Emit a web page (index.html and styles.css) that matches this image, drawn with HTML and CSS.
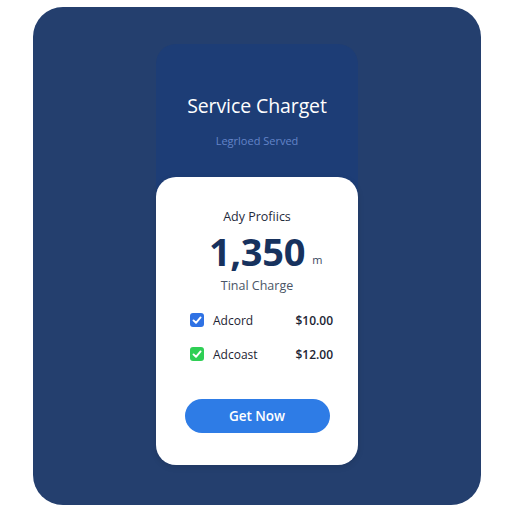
FILE: index.html
```html
<!DOCTYPE html>
<html lang="en">
<head>
<meta charset="utf-8">
<title>Service Charget</title>
<link rel="stylesheet" href="styles.css">
</head>
<body>
  <main class="panel">
    <section class="card">
      <header class="card-head">
        <h1 class="title">Service Charget</h1>
        <p class="subtitle">Legrloed Served</p>
      </header>
      <div class="card-body">
        <p class="label">Ady Profiics</p>
        <div class="amount">
          <span class="amount-value">1,350</span>
          <span class="amount-unit">m</span>
        </div>
        <p class="caption">Tinal Charge</p>
        <ul class="items">
          <li class="item">
            <span class="check check-blue">
              <svg viewBox="0 0 14 14" width="14" height="14"><path d="M3.5 7.4 L6 9.8 L10.6 4.4" fill="none" stroke="#fff" stroke-width="1.9" stroke-linecap="round" stroke-linejoin="round"/></svg>
            </span>
            <span class="item-name">Adcord</span>
            <span class="item-price">$10.00</span>
          </li>
          <li class="item">
            <span class="check check-green">
              <svg viewBox="0 0 14 14" width="14" height="14"><path d="M3.5 7.4 L6 9.8 L10.6 4.4" fill="none" stroke="#fff" stroke-width="1.9" stroke-linecap="round" stroke-linejoin="round"/></svg>
            </span>
            <span class="item-name">Adcoast</span>
            <span class="item-price">$12.00</span>
          </li>
        </ul>
        <button class="cta">Get Now</button>
      </div>
    </section>
  </main>
</body>
</html>
```

FILE: styles.css
```css
* { box-sizing: border-box; }

body {
  margin: 0;
  background: #ffffff;
  font-family: "Open Sans", "Noto Sans", sans-serif;
}

.panel {
  margin: 7px 0 0 33px;
  width: 448px;
  height: 498px;
  border-radius: 30px;
  background: #243f6e;
  display: flex;
  justify-content: center;
  padding-top: 37px;
}

.card {
  width: 202px;
  height: 421px;
  border-radius: 20px;
  background: #1d3d76;
  display: flex;
  flex-direction: column;
}

.card-head {
  height: 133px;
  display: flex;
  flex-direction: column;
  align-items: center;
  padding-top: 48px;
}

.title {
  margin: 0;
  font-size: 19.5px;
  font-weight: 400;
  line-height: 28px;
  color: #ffffff;
  letter-spacing: -0.1px;
}

.subtitle {
  margin: 13px 0 0;
  font-size: 11px;
  line-height: 16px;
  color: #6384c8;
}

.card-body {
  flex: 1;
  background: #ffffff;
  border-radius: 20px;
  display: flex;
  flex-direction: column;
  align-items: center;
  padding: 30px 25px 32px 34px;
  box-shadow: 0 2px 6px rgba(0, 0, 0, 0.12);
}

.label {
  margin: 0;
  font-size: 12.5px;
  line-height: 20px;
  color: #1f2a3c;
  padding-right: 9px;
}

.amount {
  position: relative;
  margin-top: 4px;
  height: 40px;
  padding-right: 9px;
}

.amount-value {
  display: block;
  font-size: 38px;
  font-weight: 700;
  line-height: 40px;
  color: #17325e;
  letter-spacing: -0.3px;
}

.amount-unit {
  position: absolute;
  left: 100%;
  bottom: 5px;
  margin-left: -2px;
  font-size: 11px;
  line-height: 12px;
  color: #3a4660;
}

.caption {
  margin: 7px 0 0;
  font-size: 12.5px;
  line-height: 16px;
  color: #4a5566;
  padding-right: 9px;
}

.items {
  list-style: none;
  margin: 15px 0 0;
  padding: 0;
  width: 100%;
  display: flex;
  flex-direction: column;
  gap: 12px;
}

.item {
  height: 22px;
  display: flex;
  align-items: center;
  font-size: 12px;
  font-weight: 500;
  color: #1d2433;
}

.check {
  width: 14px;
  height: 14px;
  border-radius: 3px;
  display: flex;
  margin-right: 9px;
}

.check-blue { background: #2f72e4; }
.check-green { background: #2fcf55; }

.item-name { flex: 1; }

.item-price { font-weight: 600; }

.cta {
  margin-top: 34px;
  margin-left: -9px;
  width: 145px;
  height: 34px;
  border: none;
  border-radius: 17px;
  background: #2e7ce6;
  color: #ffffff;
  font-family: "Open Sans", "Noto Sans", sans-serif;
  font-size: 13.5px;
  font-weight: 600;
}
```
